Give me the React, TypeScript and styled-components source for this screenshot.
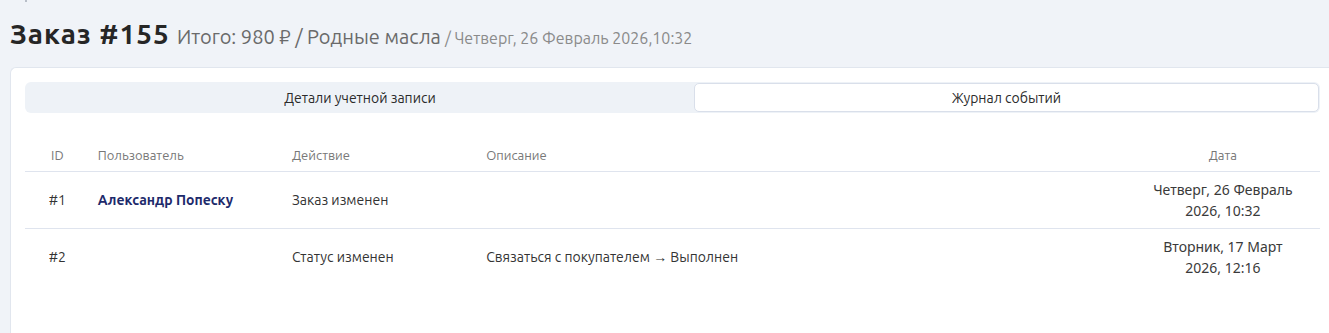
import React from 'react';
import styled, {createGlobalStyle} from "styled-components";

const GlobalStyle = createGlobalStyle`
  body {
    margin: 0;
    background: #f0f3f8;
    font-family: Ubuntu, "Noto Sans", "Open Sans", sans-serif;
    color: #333;
  }
`

type Row = {
    id: string;
    user?: string;
    action: string;
    description?: string;
    date: [string, string];
}

const rows: Row[] = [
    {id: '#1', user: 'Александр Попеску', action: 'Заказ изменен', date: ['Четверг, 26 Февраль', '2026, 10:32']},
    {
        id: '#2',
        action: 'Статус изменен',
        description: 'Связаться с покупателем → Выполнен',
        date: ['Вторник, 17 Март', '2026, 12:16']
    },
]

const App = () => {
    return (
        <Page>
            <GlobalStyle/>
            <Crumb/>
            <Header>
                <Title>Заказ #155</Title>
                <Summary>Итого: 980 ₽ / Родные масла</Summary>
                <Stamp>/ Четверг, 26 Февраль 2026,10:32</Stamp>
            </Header>
            <Card>
                <Tabs>
                    <Tab>Детали учетной записи</Tab>
                    <Tab $active>Журнал событий</Tab>
                </Tabs>
                <Table>
                    <colgroup>
                        <col style={{width: '5%'}}/>
                        <col style={{width: '15%'}}/>
                        <col style={{width: '15%'}}/>
                        <col style={{width: '50%'}}/>
                        <col style={{width: '15%'}}/>
                    </colgroup>
                    <thead>
                    <tr>
                        <Th $align='center'>ID</Th>
                        <Th>Пользователь</Th>
                        <Th>Действие</Th>
                        <Th>Описание</Th>
                        <Th $align='center'>Дата</Th>
                    </tr>
                    </thead>
                    <tbody>
                    {rows.map(r => (
                        <Tr key={r.id}>
                            <Td $align='center'>{r.id}</Td>
                            <Td>{r.user && <UserName>{r.user}</UserName>}</Td>
                            <Td>{r.action}</Td>
                            <Td>{r.description}</Td>
                            <DateCell>{r.date[0]}<br/>{r.date[1]}</DateCell>
                        </Tr>
                    ))}
                    </tbody>
                </Table>
            </Card>
        </Page>
    );
};

export default App;

const Page = styled.div`
  padding: 0 0 0 10px;
  overflow: hidden;
  height: 333px;
  box-sizing: border-box;
`

const Crumb = styled.div`
  width: 2px;
  height: 2px;
  margin-left: 15px;
  background: #b8bec8;
`

const Header = styled.div`
  display: flex;
  align-items: baseline;
  gap: 8px;
  height: 32px;
  margin: 16px 0 17px;
  white-space: nowrap;
`

const Title = styled.h1`
  margin: 0;
  font-size: 28px;
  font-weight: 700;
  letter-spacing: 1px;
  color: #262626;
`

const Summary = styled.span`
  font-size: 20px;
  color: #6a6a6a;
  margin-left: -1px;
`

const Stamp = styled.span`
  font-size: 16px;
  color: #8a8a8a;
  margin-left: -4px;
`

const Card = styled.div`
  background: #fff;
  border: 1px solid #e1e6ee;
  border-right: none;
  border-radius: 6px 0 0 0;
  padding: 14px 9px 80px 14px;
`

const Tabs = styled.div`
  display: grid;
  grid-template-columns: 669fr 626fr;
  background: #eef2f7;
  border-radius: 6px;
  padding: 1px;
  height: 31px;
  box-sizing: border-box;
`

const Tab = styled.div<{ $active?: boolean }>`
  display: flex;
  align-items: center;
  justify-content: center;
  font-size: 14px;
  color: #2b2b2b;
  border-radius: 5px;
  background: ${p => p.$active ? '#fff' : 'transparent'};
  border: 1px solid ${p => p.$active ? '#d9dfea' : 'transparent'};
`

const Table = styled.table`
  width: 100%;
  border-collapse: collapse;
  table-layout: fixed;
  margin-top: 27px;
`

const Th = styled.th<{ $align?: string }>`
  text-align: ${p => p.$align || 'left'};
  font-weight: 400;
  font-size: 13px;
  color: #777;
  padding: 7px 8px;
  line-height: 17px;
  border-bottom: 1px solid #dfe4ee;
`

const Tr = styled.tr`
  border-bottom: 1px solid #dfe4ee;

  &:last-child {
    border-bottom: none;
  }
`

const Td = styled.td<{ $align?: string }>`
  text-align: ${p => p.$align || 'left'};
  font-size: 14px;
  color: #333;
  padding: 7px 8px;
  line-height: 21px;
  vertical-align: middle;
`

const UserName = styled.span`
  font-weight: 700;
  color: #1d2a6b;
`

const DateCell = styled(Td)`
  text-align: center;
  font-family: "Noto Sans", "Open Sans", sans-serif;
  font-size: 14px;
  color: #3a3a3a;
`
